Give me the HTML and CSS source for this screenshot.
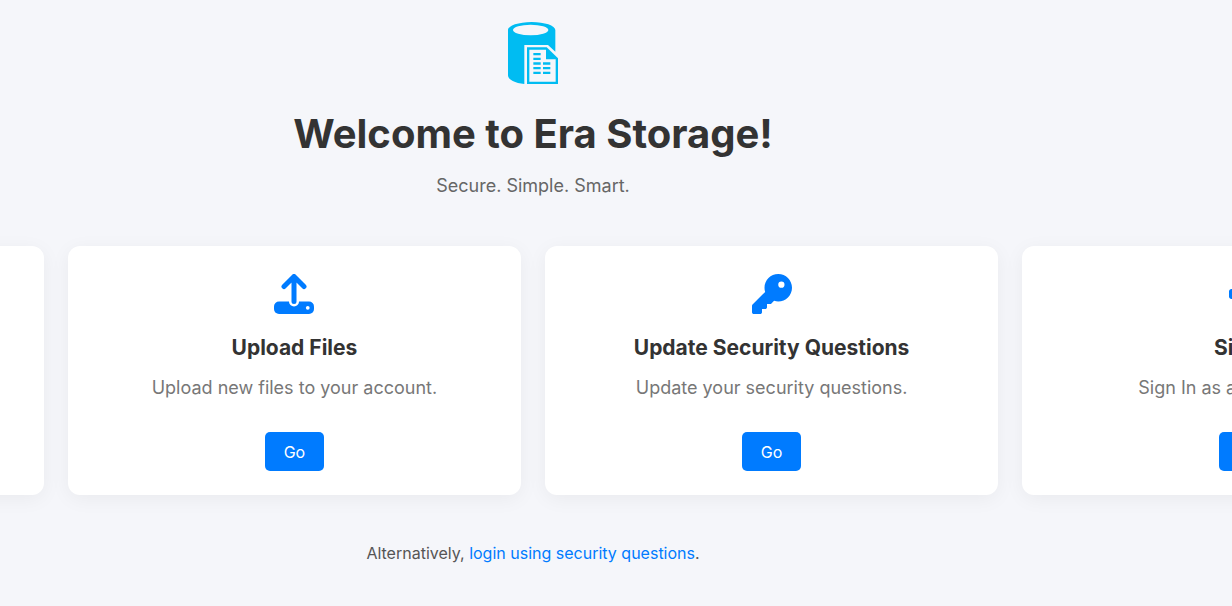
FILE: index.html
```html
<!DOCTYPE html>
<html lang="en">
<head>
<meta charset="utf-8">
<meta name="viewport" content="width=device-width, initial-scale=1">
<title>Era Storage</title>
<link rel="stylesheet" href="styles.css">
</head>
<body>
<main class="page">
  <header class="hero">
    <svg class="logo" viewBox="0 0 150 195" aria-hidden="true">
      <path fill="#00bcf2" d="M0 30C0 17 32 6 71 6s71 11 71 24v65L120 75H49v117C22 190 0 180 0 166z"/>
      <ellipse fill="#f5f6fa" cx="68" cy="30" rx="53" ry="16"/>
      <path fill="#00bcf2" d="M57 82h59l34 33v77H57z"/>
      <path fill="#f5f6fa" d="M64 89h50v29h29v67H64z"/>
      <path fill="#00bcf2" d="M76 99h22v7H76zM76 113h22v7H76zM76 127h22v7H76zM76 141h22v7H76zM76 155h22v7H76zM105 127h22v7h-22zM105 141h22v7h-22zM105 155h22v7h-22z"/>
    </svg>
    <h1 class="title">Welcome to Era Storage!</h1>
    <p class="tagline">Secure. Simple. Smart.</p>
  </header>

  <section class="carousel" aria-label="Actions">
    <div class="track">
      <article class="card"></article>
      <article class="card">
        <svg class="icon" viewBox="0 0 512 512" aria-hidden="true">
          <rect x="0" y="352" width="512" height="160" rx="64" fill="#007bff"/>
          <path d="M256 300v52" stroke="#fff" stroke-width="128" stroke-linecap="round"/>
          <path d="M256 32v320M128 160L256 32l128 128" fill="none" stroke="#007bff" stroke-width="64" stroke-linecap="round" stroke-linejoin="round"/>
          <circle cx="432" cy="432" r="24" fill="#fff"/>
        </svg>
        <h2 class="card-title">Upload Files</h2>
        <p class="card-text">Upload new files to your account.</p>
        <button class="go" type="button">Go</button>
      </article>
      <article class="card">
        <svg class="icon" viewBox="0 0 512 512" aria-hidden="true">
          <path fill="#007bff" d="M336 352c97.200 0 176-78.800 176-176S433.200 0 336 0S160 78.800 160 176c0 18.700 2.900 36.800 8.300 53.700L7 391c-4.500 4.500-7 10.600-7 17v80c0 13.300 10.700 24 24 24h80c13.300 0 24-10.700 24-24V448h40c13.300 0 24-10.700 24-24V384h40c6.400 0 12.500-2.500 17-7l33.300-33.300c16.900 5.400 35 8.300 53.700 8.300zM376 96a40 40 0 1 1 0 80 40 40 0 1 1 0-80z"/>
        </svg>
        <h2 class="card-title">Update Security Questions</h2>
        <p class="card-text">Update your security questions.</p>
        <button class="go" type="button">Go</button>
      </article>
      <article class="card">
        <svg class="icon" viewBox="0 0 512 512" aria-hidden="true">
          <path fill="#007bff" d="M345 273L201 409c-16 15-41 4-41-17v-72H32c-18 0-32-14-32-32v-64c0-18 14-32 32-32h128v-72c0-21 25-32 41-17l144 136c10 9 10 25 0 34zM352 416h64c18 0 32-14 32-32V128c0-18-14-32-32-32h-64V32h64c53 0 96 43 96 96v256c0 53-43 96-96 96h-64z"/>
        </svg>
        <h2 class="card-title">Sign In</h2>
        <p class="card-text">Sign In as a different user.</p>
        <button class="go" type="button">Go</button>
      </article>
    </div>
  </section>

  <p class="alternative">Alternatively, <a class="link" href="#">login using security questions</a>.</p>
</main>
</body>
</html>
```
FILE: styles.css
```css
* {
  box-sizing: border-box;
}

body {
  margin: 0;
  overflow-x: hidden;
  background: #f5f6fa;
  color: #333;
  font-family: Inter, "Liberation Sans", sans-serif;
  font-size: 16px;
}

.page {
  display: flex;
  flex-direction: column;
  align-items: center;
  margin-right: 166px;
  padding: 20px 0;
}

.hero {
  display: flex;
  flex-direction: column;
  align-items: center;
  text-align: center;
}

.logo {
  width: 50px;
  height: 65px;
}

.title {
  margin: 24px 0 16px;
  font-size: 40px;
  font-weight: 700;
  line-height: 50px;
}

.tagline {
  margin: 0;
  color: #666;
  font-size: 18px;
  line-height: 22px;
}

.carousel {
  display: flex;
  justify-content: center;
  width: 100%;
  margin-top: 49px;
}

.track {
  display: grid;
  flex: none;
  grid-template-columns: repeat(4, 1fr);
  gap: 24px;
  width: 176.8%;
}

.card {
  display: flex;
  flex-direction: column;
  align-items: center;
  padding: 28px 24px 24px;
  border-radius: 12px;
  background: #fff;
  box-shadow: 0 4px 20px rgba(0, 0, 0, 0.05);
  text-align: center;
}

.icon {
  width: 40px;
  height: 40px;
}

.card-title {
  margin: 21px 0 15px;
  font-size: 21px;
  font-weight: 700;
  line-height: 26px;
}

.card-text {
  margin: 0 0 32px;
  color: #777;
  font-size: 18px;
  line-height: 24px;
}

.go {
  padding: 10px 19px 9px;
  border: 0;
  border-radius: 5px;
  background: #007bff;
  color: #fff;
  font: inherit;
  line-height: 20px;
  cursor: pointer;
}

.alternative {
  margin: 48px 0 0;
  color: #555;
  line-height: 20px;
}

.link {
  color: #007bff;
  text-decoration: none;
}
```
